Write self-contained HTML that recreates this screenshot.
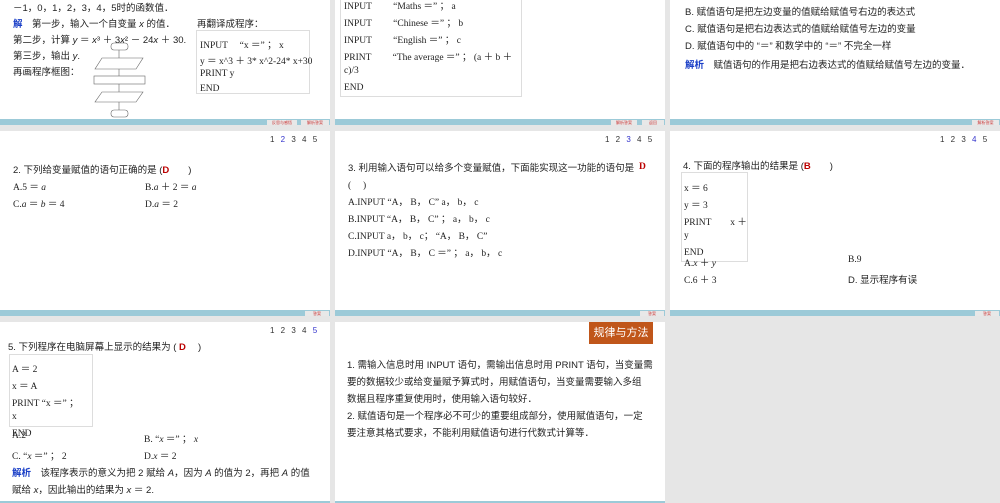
<!DOCTYPE html>
<html><head><meta charset="utf-8"><style>
body{margin:0;width:1000px;height:503px;background:#e6e6e6;position:relative;overflow:hidden;font-family:"Liberation Serif","Noto Sans CJK SC",serif;font-size:9.5px;color:#222}
.s{position:absolute;background:#fff;overflow:hidden}
.t{position:absolute;white-space:nowrap}
.bar{position:absolute;left:0;right:0;height:6px;background:#9ccad8}
.btn{position:absolute;height:5px;background:#e8e8e8;font-size:4px;color:#c33;line-height:5px;text-align:center}
.box{position:absolute;border:1px solid #ddd;background:#fff}
.nav{position:absolute;font-family:"Liberation Sans",sans-serif;font-size:8px;color:#333;word-spacing:4px}
.nav b{font-weight:normal;color:#33c}
.r{color:#b00;font-weight:bold}
.j{color:#1a3fc7;font-weight:bold}
.cn{font-family:"Liberation Sans","Noto Sans CJK SC",sans-serif}
i{font-style:italic}
</style></head><body>

<!-- slide 1 -->
<div class="s" style="left:0;top:0;width:330px;height:125px">
<div class="t cn" style="left:13px;top:0">－1，0，1，2，3，4，5时的函数值．</div>
<div class="t cn" style="left:13px;top:16px"><span class="j">解</span>　第一步，输入一个自变量 <i>x</i> 的值．</div>
<div class="t cn" style="left:13px;top:32px">第二步，计算 <i>y</i> ＝ <i>x</i>³ ＋ 3<i>x</i>² － 24<i>x</i> ＋ 30.</div>
<div class="t cn" style="left:13px;top:48px">第三步，输出 <i>y</i>.</div>
<div class="t cn" style="left:13px;top:64px">再画程序框图：</div>
<svg style="position:absolute;left:92px;top:42px" width="56" height="78" viewBox="0 0 56 78" fill="none" stroke="#666" stroke-width=".6">
<rect x="19" y="1" width="17" height="7" rx="3"/><line x1="27" y1="8" x2="27" y2="16"/>
<polygon points="10,16 51,16 44,27 3,27"/><line x1="27" y1="27" x2="27" y2="34"/>
<rect x="2" y="34" width="51" height="8"/><line x1="27" y1="42" x2="27" y2="50"/>
<polygon points="10,50 51,50 44,60 3,60"/><line x1="27" y1="60" x2="27" y2="68"/>
<rect x="19" y="68" width="17" height="7" rx="3"/></svg>
<div class="t cn" style="left:197px;top:16px">再翻译成程序：</div>
<div class="box" style="left:196px;top:30px;width:112px;height:62px"></div>
<div class="t" style="left:200px;top:37px">INPUT　 “x ＝” ； x</div>
<div class="t" style="left:200px;top:53px">y ＝ x^3 ＋ 3* x^2-24* x+30</div>
<div class="t" style="left:200px;top:69px">PRINT y</div>
<div class="t" style="left:200px;top:84px">END</div>
<div class="bar" style="top:119px"></div>
<div class="btn" style="left:267px;top:120px;width:30px">反思与感悟</div>
<div class="btn" style="left:301px;top:120px;width:28px">解析答案</div>
</div>

<!-- slide 2 -->
<div class="s" style="left:335px;top:0;width:330px;height:125px">
<div class="box" style="left:5px;top:-5px;width:180px;height:100px"></div>
<div class="t" style="left:9px;top:-2px">INPUT　　 “Maths ＝” ； a</div>
<div class="t" style="left:9px;top:15px">INPUT　　 “Chinese ＝” ； b</div>
<div class="t" style="left:9px;top:32px">INPUT　　 “English ＝” ； c</div>
<div class="t" style="left:9px;top:49px">PRINT　　 “The average ＝” ； (a ＋ b ＋</div>
<div class="t" style="left:9px;top:66px">c)/3</div>
<div class="t" style="left:9px;top:83px">END</div>
<div class="bar" style="top:119px"></div>
<div class="btn" style="left:276px;top:120px;width:26px">解析答案</div>
<div class="btn" style="left:307px;top:120px;width:22px">返回</div>
</div>

<!-- slide 3 -->
<div class="s" style="left:670px;top:0;width:330px;height:125px">
<div class="t cn" style="left:15px;top:4px">B. 赋值语句是把左边变量的值赋给赋值号右边的表达式</div>
<div class="t cn" style="left:15px;top:21px">C. 赋值语句是把右边表达式的值赋给赋值号左边的变量</div>
<div class="t cn" style="left:15px;top:38px">D. 赋值语句中的 “＝” 和数学中的 “＝” 不完全一样</div>
<div class="t cn" style="left:15px;top:57px"><span class="j">解析</span>　赋值语句的作用是把右边表达式的值赋给赋值号左边的变量．</div>
<div class="bar" style="top:119px"></div>
<div class="btn" style="left:302px;top:120px;width:27px">解析答案</div>
</div>

<!-- slide 4 -->
<div class="s" style="left:0;top:131px;width:330px;height:185px">
<div class="nav" style="left:270px;top:4px">1 <b>2</b> 3 4 5</div>
<div class="t cn" style="left:13px;top:31px">2. 下列给变量赋值的语句正确的是 (<span class="r">D</span>　　)</div>
<div class="t" style="left:13px;top:48px">A.5 ＝ <i>a</i></div>
<div class="t" style="left:145px;top:48px">B.<i>a</i> ＋ 2 ＝ <i>a</i></div>
<div class="t" style="left:13px;top:65px">C.<i>a</i> ＝ <i>b</i> ＝ 4</div>
<div class="t" style="left:145px;top:65px">D.<i>a</i> ＝ 2</div>
<div class="bar" style="top:179px"></div>
<div class="btn" style="left:305px;top:180px;width:24px">答案</div>
</div>

<!-- slide 5 -->
<div class="s" style="left:335px;top:131px;width:330px;height:185px">
<div class="nav" style="left:270px;top:4px">1 2 <b>3</b> 4 5</div>
<div class="t cn" style="left:13px;top:29px">3. 利用输入语句可以给多个变量赋值，下面能实现这一功能的语句是</div>
<div class="t r" style="left:304px;top:31px">D</div>
<div class="t" style="left:13px;top:46px">(　 )</div>
<div class="t" style="left:13px;top:63px">A.INPUT “A， B， C” a， b， c</div>
<div class="t" style="left:13px;top:80px">B.INPUT “A， B， C” ； a， b， c</div>
<div class="t" style="left:13px;top:97px">C.INPUT a， b， c； “A， B， C”</div>
<div class="t" style="left:13px;top:114px">D.INPUT “A， B， C ＝” ； a， b， c</div>
<div class="bar" style="top:179px"></div>
<div class="btn" style="left:305px;top:180px;width:24px">答案</div>
</div>

<!-- slide 6 -->
<div class="s" style="left:670px;top:131px;width:330px;height:185px">
<div class="nav" style="left:270px;top:4px">1 2 3 <b>4</b> 5</div>
<div class="t cn" style="left:13px;top:27px">4. 下面的程序输出的结果是 (<span class="r">B</span>　　)</div>
<div class="box" style="left:11px;top:41px;width:65px;height:88px;background:transparent"></div>
<div class="t" style="left:14px;top:49px">x ＝ 6</div>
<div class="t" style="left:14px;top:66px">y ＝ 3</div>
<div class="t" style="left:14px;top:83px">PRINT　　x ＋</div>
<div class="t" style="left:14px;top:100px">y</div>
<div class="t" style="left:14px;top:117px">END</div>
<div class="t" style="left:14px;top:124px">A.<i>x</i> ＋ <i>y</i></div>
<div class="t" style="left:178px;top:124px">B.9</div>
<div class="t" style="left:14px;top:141px">C.6 ＋ 3</div>
<div class="t cn" style="left:178px;top:141px">D. 显示程序有误</div>
<div class="bar" style="top:179px"></div>
<div class="btn" style="left:305px;top:180px;width:24px">答案</div>
</div>

<!-- slide 7 -->
<div class="s" style="left:0;top:322px;width:330px;height:181px">
<div class="nav" style="left:270px;top:4px">1 2 3 4 <b>5</b></div>
<div class="t cn" style="left:8px;top:17px">5. 下列程序在电脑屏幕上显示的结果为 ( <span class="r">D</span>　 )</div>
<div class="box" style="left:9px;top:32px;width:82px;height:71px"></div>
<div class="t" style="left:12px;top:39px">A ＝ 2</div>
<div class="t" style="left:12px;top:56px">x ＝ A</div>
<div class="t" style="left:12px;top:73px">PRINT “x ＝” ；</div>
<div class="t" style="left:12px;top:90px">x</div>
<div class="t" style="left:12px;top:107px">END</div>
<div class="t" style="left:12px;top:109px">A.2</div>
<div class="t" style="left:144px;top:109px">B. “<i>x</i> ＝” ； <i>x</i></div>
<div class="t" style="left:12px;top:126px">C. “<i>x</i> ＝” ； 2</div>
<div class="t" style="left:144px;top:126px">D.<i>x</i> ＝ 2</div>
<div class="t cn" style="left:12px;top:143px"><span class="j">解析</span>　该程序表示的意义为把 2 赋给 <i>A</i>，因为 <i>A</i> 的值为 2，再把 <i>A</i> 的值</div>
<div class="t cn" style="left:12px;top:160px">赋给 <i>x</i>，因此输出的结果为 <i>x</i> ＝ 2.</div>
<div class="bar" style="top:179px"></div>
</div>

<!-- slide 8 -->
<div class="s" style="left:335px;top:322px;width:330px;height:181px">
<div style="position:absolute;left:254px;top:0;width:64px;height:22px;background:#c0561a;color:#fff;font-family:'Liberation Sans','Noto Sans CJK SC',sans-serif;font-size:11px;line-height:22px;text-align:center">规律与方法</div>
<div class="t cn" style="left:12px;top:35px">1. 需输入信息时用 INPUT 语句，需输出信息时用 PRINT 语句，当变量需</div>
<div class="t cn" style="left:12px;top:52px">要的数据较少或给变量赋予算式时，用赋值语句，当变量需要输入多组</div>
<div class="t cn" style="left:12px;top:69px">数据且程序重复使用时，使用输入语句较好．</div>
<div class="t cn" style="left:12px;top:86px">2. 赋值语句是一个程序必不可少的重要组成部分，使用赋值语句，一定</div>
<div class="t cn" style="left:12px;top:103px">要注意其格式要求，不能利用赋值语句进行代数式计算等．</div>
<div class="bar" style="top:179px"></div>
</div>
</body></html>
